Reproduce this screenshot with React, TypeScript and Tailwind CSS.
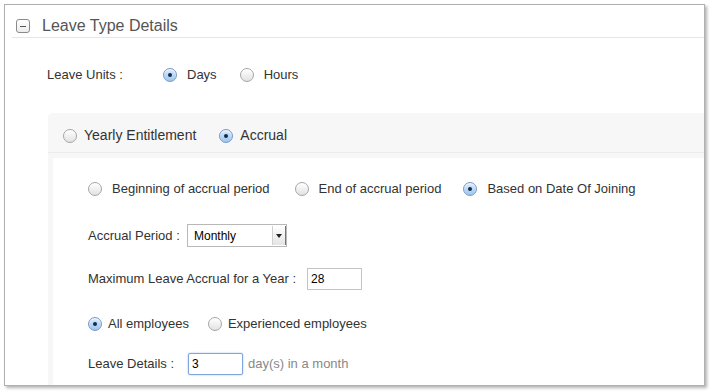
import React from "react";

function Radio({ checked, className = "" }: { checked?: boolean; className?: string }) {
  return checked ? (
    <span className={"flex h-[14px] w-[14px] shrink-0 items-center justify-center rounded-full border border-[#7c98c0] bg-gradient-to-b from-[#d9ecff] to-[#9cc6f2] shadow-[inset_0_1px_1px_rgba(255,255,255,0.8)] " + className}>
      <span className="h-[4px] w-[4px] rounded-full bg-[#1a2a40]" />
    </span>
  ) : (
    <span className={"block h-[14px] w-[14px] shrink-0 rounded-full border border-[#a5a5a5] bg-gradient-to-b from-[#ffffff] to-[#e2e2e2] shadow-[inset_0_1px_1px_rgba(255,255,255,0.9)] " + className} />
  );
}

export default function App() {
  return (
    <div
      className="h-[391px] w-[711px] bg-white pl-[4px] pt-[4px] text-[#333]"
      style={{ fontFamily: '"Liberation Sans", Arial, sans-serif' }}
    >
      <div className="h-[382px] w-[701px] overflow-hidden border border-[#b0b0b0] bg-white shadow-[2px_2px_3px_0_rgba(0,0,0,0.3)]">
        {/* header */}
        <div className="ml-[7px] flex h-[33px] items-center border-b border-[#e6e6e6] pt-[10px]">
          <span className="ml-[4px] flex h-[14px] w-[14px] items-center justify-center rounded-[3px] border border-[#8a8a8a] bg-gradient-to-b from-white to-[#ececec]">
            <span className="h-[1px] w-[6px] bg-[#555]" />
          </span>
          <span className="ml-[12px] text-[16px] text-[#555]">Leave Type Details</span>
        </div>

        {/* leave units */}
        <div className="mt-[27px] flex h-[20px] items-center text-[13px]">
          <span className="ml-[42px] w-[116px]">Leave Units :</span>
          <Radio checked />
          <span className="ml-[10px]">Days</span>
          <Radio className="ml-[23px]" />
          <span className="ml-[10px]">Hours</span>
        </div>

        {/* panel */}
        <div className="ml-[43px] mt-[28px] h-[300px] rounded-tl-[5px] bg-[#f7f7f7] pl-[5px]">
          <div className="-ml-[5px] flex h-[40px] items-center border-b border-[#ececec] pl-[15px] pt-[6px] text-[14px]">
            <Radio />
            <span className="ml-[7px]">Yearly Entitlement</span>
            <Radio checked className="ml-[23px]" />
            <span className="ml-[7px]">Accrual</span>
          </div>
          <div className="mt-[5px] h-[260px] bg-white pl-[35px] pt-[21px] text-[13px]">
            <div className="flex h-[20px] items-center">
              <Radio />
              <span className="ml-[10px]">Beginning of accrual period</span>
              <Radio className="ml-[25px]" />
              <span className="ml-[10px]">End of accrual period</span>
              <Radio checked className="ml-[22px]" />
              <span className="ml-[10px]">Based on Date Of Joining</span>
            </div>

            <div className="mt-[25px] flex h-[23px] items-center">
              <span className="w-[99px]">Accrual Period :</span>
              <div className="flex h-[23px] w-[100px] items-center border border-[#b8b8b8] bg-white">
                <span className="ml-[6px] flex-1 text-[12px] text-black">Monthly</span>
                <span className="mr-[1px] flex h-[19px] w-[13px] items-center justify-center border-l border-[#d0d0d0] bg-gradient-to-b from-white to-[#e4e4e4] shadow-[1px_0_0_#777]">
                  <svg width="6" height="4" viewBox="0 0 6 4">
                    <path d="M0 0h6L3 4z" fill="#222" />
                  </svg>
                </span>
              </div>
            </div>

            <div className="mt-[21px] flex h-[22px] items-center">
              <span className="w-[219px]">Maximum Leave Accrual for a Year :</span>
              <div className="flex h-[22px] w-[55px] items-center border border-[#c4c4c4] bg-white pl-[3px] text-[12px] text-black">
                28
              </div>
            </div>

            <div className="mt-[24px] flex h-[20px] items-center">
              <Radio checked />
              <span className="ml-[6px]">All employees</span>
              <Radio className="ml-[19px]" />
              <span className="ml-[6px]">Experienced employees</span>
            </div>

            <div className="mt-[19px] flex h-[22px] items-center">
              <span className="w-[100px]">Leave Details :</span>
              <div className="flex h-[22px] w-[55px] items-center rounded-[2px] border border-[#7da6dc] bg-white pl-[3px] text-[12px] text-black shadow-[0_0_2px_rgba(90,150,230,0.6)]">
                3
              </div>
              <span className="ml-[5px] text-[#888]">day(s) in a month</span>
            </div>
          </div>
        </div>
      </div>
    </div>
  );
}
